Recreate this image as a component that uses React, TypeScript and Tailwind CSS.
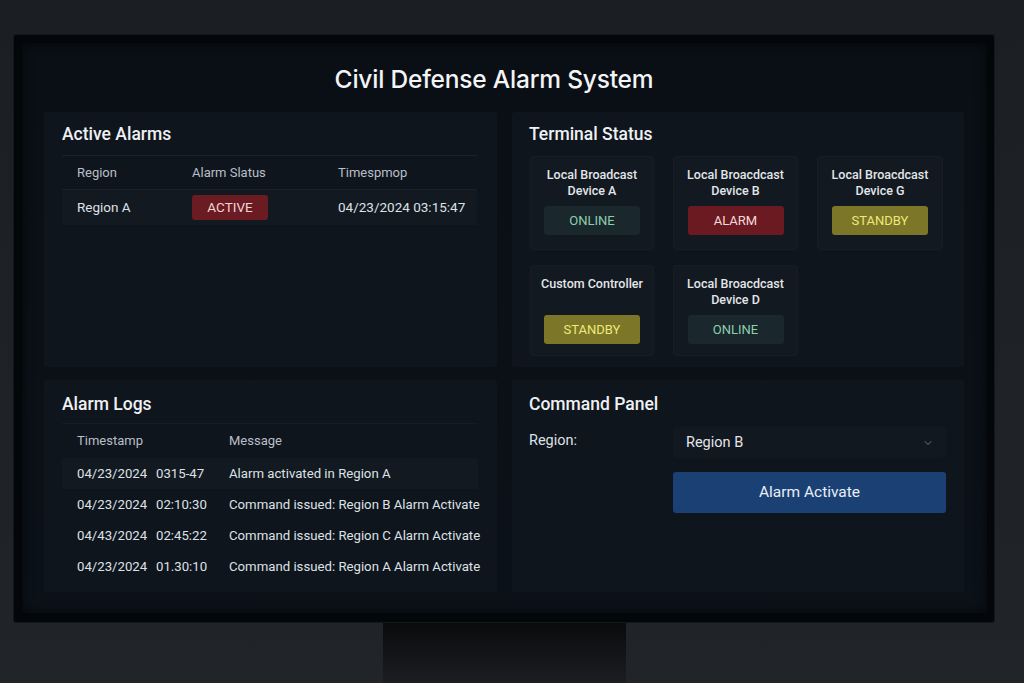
import { ChevronDown } from 'lucide-react'

type Terminal = { name: string[]; status: 'ONLINE' | 'ALARM' | 'STANDBY' }

const terminals: Terminal[] = [
  { name: ['Local Broadcast', 'Device A'], status: 'ONLINE' },
  { name: ['Local Broacdcast', 'Device B'], status: 'ALARM' },
  { name: ['Local Broacdcast', 'Device G'], status: 'STANDBY' },
  { name: ['Custom Controller'], status: 'STANDBY' },
  { name: ['Local Broacdcast', 'Device D'], status: 'ONLINE' },
]

const logs = [
  { date: '04/23/2024', time: '0315-47', msg: 'Alarm activated in Region A' },
  { date: '04/23/2024', time: '02:10:30', msg: 'Command issued: Region B Alarm Activate' },
  { date: '04/43/2024', time: '02:45:22', msg: 'Command issued: Region C Alarm Activate' },
  { date: '04/23/2024', time: '01.30:10', msg: 'Command issued: Region A Alarm Activate' },
]

function StatusBadge({ status }: { status: Terminal['status'] }) {
  const cls =
    status === 'ONLINE'
      ? 'bg-[#1a272c] text-[#8ccfae]'
      : status === 'ALARM'
        ? 'bg-[#6c1a21] text-[#f4dada]'
        : 'bg-[#7b7628] text-[#eee979]'
  return (
    <div className={`mx-auto w-[96px] h-[29px] rounded-[3px] flex items-center justify-center text-[13px] ${cls}`}>
      {status}
    </div>
  )
}

export default function App() {
  return (
    <div
      className="w-[1024px] h-[683px] overflow-hidden bg-gradient-to-b from-[#1b1e22] to-[#212429] pt-[34px] pl-[13px]"
      style={{ fontFamily: 'Roboto, "Noto Sans", sans-serif' }}
    >
      {/* monitor */}
      <div className="w-[982px] h-[589px] bg-[#04070a] rounded-[3px] border border-[#14181d] pt-[8px] pl-[8px] pr-[7px] pb-[9px]">
        <div className="w-full h-full bg-gradient-to-b from-[#0a0f15] to-[#0b1118] px-[22px] pt-[20px] shadow-[inset_0_0_12px_rgba(0,0,0,0.6)]">
          <h1
            className="h-[32px] leading-[32px] text-center text-[24.5px] font-medium text-[#f3f4f6] tracking-[-0.2px] pr-[21px]"
            style={{ fontFamily: 'Inter, Roboto, sans-serif' }}
          >
            Civil Defense Alarm System
          </h1>

          <div className="mt-[17px] grid grid-cols-[453px_452px] grid-rows-[255px_212px] gap-x-[15px] gap-y-[13px]">
            {/* Active Alarms */}
            <div className="bg-[#0f151d] rounded-[3px] pt-[10px] pl-[18px] pr-[20px]">
              <h2 className="text-[17.5px] leading-[24px] font-medium text-[#eef0f3]">Active Alarms</h2>
              <div className="mt-[9px] border-t border-[#1a212a]">
                <div className="h-[34px] flex items-center pl-[15px] text-[13px] text-[#b9bfc7] border-b border-[#1a212a]">
                  <div className="w-[115px] shrink-0">Region</div>
                  <div className="w-[146px] shrink-0">Alarm Slatus</div>
                  <div>Timespmop</div>
                </div>
                <div className="h-[35px] flex items-center pl-[15px] text-[13.5px] text-[#dde1e6] bg-[#121921]">
                  <div className="w-[115px] shrink-0">Region A</div>
                  <div className="w-[146px] shrink-0">
                    <div className="w-[76px] h-[25px] rounded-[3px] bg-[#6a1c22] text-[#f1d4d4] flex items-center justify-center text-[13.5px]">
                      ACTIVE
                    </div>
                  </div>
                  <div>04/23/2024 03:15:47</div>
                </div>
              </div>
            </div>

            {/* Terminal Status */}
            <div className="bg-[#0f151d] rounded-[3px] pt-[10px] pl-[17px] pr-[20px]">
              <h2 className="text-[17.5px] leading-[24px] font-medium text-[#eef0f3]">Terminal Status</h2>
              <div className="mt-[10px] ml-[1px] grid grid-cols-[124px_125px_126px] gap-x-[19px] gap-y-[15px] w-[414px]">
                {terminals.map((t, i) => (
                  <div
                    key={i}
                    className={`bg-[#121920] border border-[#161d26] rounded-[3px] pt-[10px] ${i < 3 ? 'h-[94px]' : 'h-[91px]'}`}
                  >
                    <div className="h-[32px] text-center text-[12.5px] leading-[16px] font-medium text-[#e3e6ea]">
                      {t.name.map(n => (
                        <div key={n}>{n}</div>
                      ))}
                    </div>
                    <div className="mt-[7px]">
                      <StatusBadge status={t.status} />
                    </div>
                  </div>
                ))}
              </div>
            </div>

            {/* Alarm Logs */}
            <div className="bg-[#0f151d] rounded-[3px] pt-[12px] pl-[18px] pr-[19px]">
              <h2 className="text-[17.5px] leading-[24px] font-medium text-[#eef0f3]">Alarm Logs</h2>
              <div className="mt-[7px] border-t border-[#151c24]">
                <div className="h-[34px] flex items-center pl-[15px] text-[13px] text-[#b9bfc7]">
                  <div className="w-[152px] shrink-0">Timestamp</div>
                  <div>Message</div>
                </div>
                {logs.map((l, i) => (
                  <div
                    key={i}
                    className={`h-[31px] flex items-center pl-[15px] text-[13.2px] text-[#dde1e6] whitespace-nowrap ${i === 0 ? 'bg-[#121920]' : ''}`}
                  >
                    <div className="w-[79px] shrink-0">{l.date}</div>
                    <div className="w-[73px] shrink-0">{l.time}</div>
                    <div>{l.msg}</div>
                  </div>
                ))}
              </div>
            </div>

            {/* Command Panel */}
            <div className="bg-[#0f151d] rounded-[3px] pt-[12px] pl-[17px] pr-[18px]">
              <h2 className="text-[17.5px] leading-[24px] font-medium text-[#eef0f3]">Command Panel</h2>
              <div className="mt-[14px] flex items-start">
                <div className="w-[144px] shrink-0 pt-[1px] text-[14.5px] leading-[20px] text-[#dde1e6]">Region:</div>
                <div className="flex-1 flex flex-col gap-[14px]">
                  <div className="h-[31px] bg-[#111820] rounded-[3px] flex items-center justify-between pl-[13px] pr-[12px] -mt-[3px]">
                    <span className="text-[14.5px] text-[#e3e6ea]">Region B</span>
                    <ChevronDown className="w-[12px] h-[12px] text-[#8d949c]" strokeWidth={1.5} />
                  </div>
                  <div className="h-[41px] bg-[#1b4174] rounded-[3px] flex items-center justify-center text-[15.5px] text-[#e8eef6]">
                    Alarm Activate
                  </div>
                </div>
              </div>
            </div>
          </div>
        </div>
      </div>

      {/* stand */}
      <div className="ml-[370px] w-[243px] h-[61px] bg-gradient-to-b from-[#0a0b0d] to-[#1c1e22]" />
    </div>
  )
}
